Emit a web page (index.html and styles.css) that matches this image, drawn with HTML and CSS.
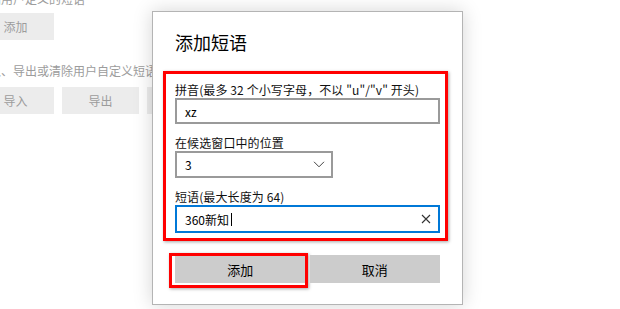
FILE: index.html
```html
<!DOCTYPE html>
<html lang="zh-CN">
<head>
<meta charset="utf-8">
<title>添加短语</title>
<link rel="stylesheet" href="styles.css">
</head>
<body>
<div class="settings">
  <div class="settings-text top-text">添加用户定义的短语</div>
  <div class="settings-row first-row">
    <div class="settings-btn">添加</div>
  </div>
  <div class="settings-text mid-text">导入、导出或清除用户自定义短语</div>
  <div class="settings-row">
    <div class="settings-btn">导入</div>
    <div class="settings-btn">导出</div>
    <div class="settings-btn">清除</div>
  </div>
</div>

<div class="dialog">
  <div class="dialog-title">添加短语</div>
  <div class="fields">
    <div class="field">
      <div class="label">拼音(最多 32 个小写字母，不以 "u"/"v" 开头)</div>
      <div class="control input-1"><span>xz</span></div>
    </div>
    <div class="field">
      <div class="label">在候选窗口中的位置</div>
      <div class="control select"><span>3</span>
        <svg class="chev" width="12" height="7" viewBox="0 0 12 7"><path d="M1 0.8 L6 5.8 L11 0.8" fill="none" stroke="#444" stroke-width="1"/></svg>
      </div>
    </div>
    <div class="field last">
      <div class="label">短语(最大长度为 64)</div>
      <div class="control input-3 focused"><span>360新知</span><i class="caret"></i>
        <svg class="clear" width="10" height="10" viewBox="0 0 10 10"><path d="M1 1 L9 9 M9 1 L1 9" fill="none" stroke="#333" stroke-width="1.1"/></svg>
      </div>
    </div>
  </div>
  <div class="actions">
    <div class="btn btn-add">添加</div>
    <div class="btn">取消</div>
  </div>
</div>
</body>
</html>
```
FILE: styles.css
```css
html, body {
  margin: 0;
  padding: 0;
}
body {
  width: 620px;
  height: 309px;
  overflow: hidden;
  position: relative;
  background: #ffffff;
  font-family: "Microsoft YaHei", "Noto Sans CJK SC", sans-serif;
  color: #000;
}

/* faded settings page behind the dialog */
.settings {
  margin-left: -23px;
  display: flex;
  flex-direction: column;
  color: #9c9c9c;
  font-size: 12px;
}
.settings-text {
  line-height: 16px;
  white-space: nowrap;
}
.top-text {
  margin-top: -9px;
}
.first-row {
  margin-top: 6px;
}
.mid-text {
  margin-top: 23px;
}
.settings-row {
  display: flex;
  gap: 8px;
}
.mid-text + .settings-row {
  margin-top: 8px;
}
.settings-btn {
  width: 77px;
  height: 27px;
  background: #ececec;
  display: flex;
  align-items: center;
  justify-content: center;
  font-size: 12px;
}

/* dialog */
.dialog {
  position: absolute;
  left: 152px;
  top: 11px;
  width: 265px;
  height: 292px;
  background: #fff;
  border: 1px solid #b4b4b4;
  box-shadow: 0 0 18px rgba(0, 0, 0, 0.17);
  padding: 0 22px;
  box-sizing: content-box;
  display: flex;
  flex-direction: column;
}
.dialog-title {
  margin-top: 18px;
  font-size: 18px;
  line-height: 24px;
  color: #000;
}
.fields {
  position: relative;
  margin-top: 28px;
  display: flex;
  flex-direction: column;
}
.fields::after {
  content: "";
  position: absolute;
  left: -12px;
  right: -8px;
  top: -11px;
  bottom: -8px;
  border: 3px solid #ff0000;
  box-shadow: 1px 1px 3px rgba(0, 0, 0, 0.35);
  pointer-events: none;
}
.field {
  display: flex;
  flex-direction: column;
  margin-bottom: 11px;
}
.field.last {
  margin-bottom: 0;
}
.label {
  font-size: 12px;
  line-height: 16px;
  white-space: nowrap;
  color: #111;
  letter-spacing: 0.1px;
}
.control {
  box-sizing: border-box;
  border: 2px solid #9a9a9a;
  display: flex;
  align-items: center;
  padding-left: 8px;
  font-size: 12px;
  color: #000;
  position: relative;
}
.input-1 {
  width: 265px;
  height: 26px;
}
.select {
  width: 158px;
  height: 27px;
  padding-right: 6px;
}
.select span {
  flex: 1;
}
.input-3 {
  width: 265px;
  height: 28px;
  padding-right: 7px;
}
.focused {
  border-color: #0078d7;
}
.caret {
  display: block;
  width: 1px;
  height: 13px;
  background: #000;
  margin-left: 2px;
}
.clear {
  margin-left: auto;
}
.actions {
  margin-top: 22px;
  display: grid;
  grid-template-columns: 1fr 1fr;
  gap: 4px;
}
.btn {
  height: 28px;
  background: #cccccc;
  display: flex;
  align-items: center;
  justify-content: center;
  font-size: 13px;
  color: #000;
  position: relative;
}
.btn-add::after {
  content: "";
  position: absolute;
  left: -6px;
  right: -2px;
  top: -2px;
  bottom: -5px;
  border: 3px solid #ff0000;
  box-shadow: 1px 1px 3px rgba(0, 0, 0, 0.35);
  pointer-events: none;
}
```
